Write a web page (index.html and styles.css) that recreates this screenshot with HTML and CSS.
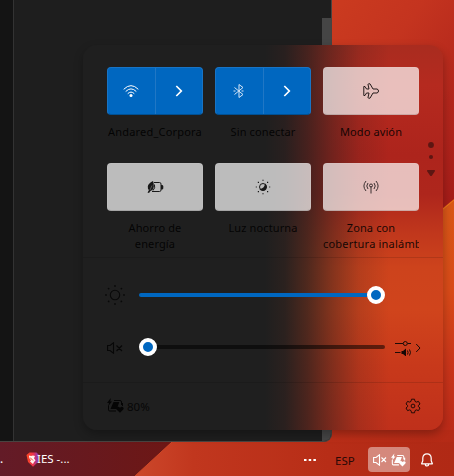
FILE: index.html
```html
<!DOCTYPE html>
<html lang="es">
<head>
<meta charset="utf-8">
<title>Configuración rápida</title>
<link rel="stylesheet" href="styles.css">
</head>
<body>
<div class="desktop">
  <svg class="wallpaper" viewBox="0 0 454 476" aria-hidden="true">
    <defs>
      <linearGradient id="top" x1="330" y1="0" x2="454" y2="90" gradientUnits="userSpaceOnUse"><stop offset="0" stop-color="#cb3b1f"/><stop offset=".5" stop-color="#c4341f"/><stop offset="1" stop-color="#b3271c"/></linearGradient>
      <linearGradient id="edge" x1="0" y1="90" x2="0" y2="210" gradientUnits="userSpaceOnUse"><stop offset="0" stop-color="#a91f1a" stop-opacity="0"/><stop offset="1" stop-color="#a41b18"/></linearGradient>
      <linearGradient id="fold" x1="0" y1="200" x2="0" y2="430" gradientUnits="userSpaceOnUse"><stop offset="0" stop-color="#d95817"/><stop offset=".4" stop-color="#d84a18"/><stop offset=".7" stop-color="#ca361a"/><stop offset="1" stop-color="#bb2a18"/></linearGradient>
      <linearGradient id="wine" x1="0" y1="0" x2="172" y2="0" gradientUnits="userSpaceOnUse"><stop offset="0" stop-color="#651c28"/><stop offset="1" stop-color="#701816"/></linearGradient>
      <linearGradient id="bar" x1="140" y1="0" x2="454" y2="0" gradientUnits="userSpaceOnUse"><stop offset="0" stop-color="#d0482b"/><stop offset=".17" stop-color="#c5391f"/><stop offset=".6" stop-color="#bb2e18"/><stop offset="1" stop-color="#b42a16"/></linearGradient>
    </defs>
    <path fill="url(#top)" d="M0 0h454v476H0z"/>
    <path fill="url(#edge)" d="M320 90h134v130H320z"/>
    <path fill="url(#fold)" d="M454 199v277H320V308z"/>
    <path stroke="#ec7918" d="M454 200L430 220"/>
    <path fill="url(#bar)" d="M0 430h454v46H0z"/>
    <path fill="url(#wine)" d="M0 430h185L135 476H0z"/>
    <path stroke="#d34a28" d="M172 442L135 476"/>
  </svg>

  <div class="app-window"><div class="rail"></div><div class="canvas"></div><div class="scrollbar"></div></div>

  <section class="panel">
    <div class="tiles">
      <div class="cell">
        <div class="tile on">
          <span class="half"><svg width="16" height="14" viewBox="0 0 16 14" fill="none" stroke="#fff"><path d="M.7 5.300Q8-2 15.300 5.300M2.700 7.500Q8 2.300 13.300 7.500M4.700 9.700Q8 6.500 11.300 9.700"/><circle cx="8" cy="11.500" r="1.500" fill="#fff" stroke="none"/></svg></span>
          <span class="half"><svg width="8" height="12" viewBox="0 0 8 12" fill="none" stroke="#fff" stroke-width="1.700"><path d="M1.300 1l5 5-5 5"/></svg></span>
        </div>
        <div class="label wide">Andared_Corpora</div>
      </div>
      <div class="cell">
        <div class="tile on">
          <span class="half"><svg width="12" height="16" viewBox="0 0 12 16" fill="none" stroke="#d6e6f6"><path d="M1.500 4.500l8.500 7L6 14.500v-13l4 3-8.500 7M.5 8h2M8.500 8h2"/></svg></span>
          <span class="half"><svg width="8" height="12" viewBox="0 0 8 12" fill="none" stroke="#fff" stroke-width="1.700"><path d="M1.300 1l5 5-5 5"/></svg></span>
        </div>
        <div class="label">Sin conectar</div>
      </div>
      <div class="cell">
        <div class="tile"><svg width="16" height="16" viewBox="0 0 16 16" fill="none" stroke="#241b1b" stroke-linejoin="round"><path d="M6 6L5 1.500Q5 .8 6 .8H7L10 6h4Q15.500 6.500 15.500 8T14 10h-4l-3 5.200H6Q5 15.200 5 14.500L6 10H3.500L2 12.500H.8V3.500H2L3.500 6z"/></svg></div>
        <div class="label">Modo avión</div>
      </div>
      <div class="cell">
        <div class="tile"><svg width="17" height="14" viewBox="0 0 17 14" fill="none" stroke="#191919"><path d="M7 2.500h5.500q1.500 0 1.500 1.500v6q0 1.500-1.500 1.500H5"/><path fill="#191919" stroke="none" d="M14 5h1.500l.8 1v2.500l-.8 1H14zM6 1Q1 3.500.8 6.500T2 10L.5 12.500 2 13l1.500-2Q6.500 10 6.800 6.500T6 1z"/><path stroke="#bbb" stroke-width=".4" d="M3 10l2-4.500"/><path d="M7.500 4.500Q8.500 8 6 10.500"/></svg></div>
        <div class="label">Ahorro de<br>energía</div>
      </div>
      <div class="cell">
        <div class="tile"><svg width="16" height="16" viewBox="0 0 16 16" fill="none" stroke="#191919"><circle cx="8" cy="8" r="3.500"/><path fill="#191919" stroke="none" d="M10 4.500Q12 6 11.700 8.500A4 4 0 0 1 4.500 10Q9.500 9.500 10 4.500z"/><g fill="#191919" stroke="none"><path d="M7.400.8h1.200v1H7.400zM7.400 14.200h1.200v1H7.400zM.8 7.400h1v1.200h-1zM14.200 7.400h1v1.200h-1zM2.800 2.800h1.200V4H2.800zM12 2.800h1.200V4H12zM2.800 12h1.200v1.200H2.800zM12 12h1.200v1.200H12z"/></g></svg></div>
        <div class="label">Luz nocturna</div>
      </div>
      <div class="cell">
        <div class="tile"><svg width="16" height="14" viewBox="0 0 16 14" fill="none" stroke="#3b3030"><path d="M3 1Q-1.200 6 3 11M13 1Q17.200 6 13 11M5 3Q2.500 6 5 9M11 3Q13.500 6 11 9"/><circle cx="8" cy="5.500" r="1.500"/><path d="M8 6v7.500"/></svg></div>
        <div class="label">Zona con<span class="clip">cobertura inalámb</span></div>
      </div>
    </div>

    <div class="sliders">
      <div class="slider-row">
        <svg class="lead" width="20" height="20" viewBox="0 0 20 20" fill="none" stroke="#090909" stroke-width="1.100"><circle cx="10" cy="10" r="4.700"/><g fill="#090909" stroke="none"><circle cx="10" cy="1" r=".9"/><circle cx="10" cy="19" r=".9"/><circle cx="1" cy="10" r=".9"/><circle cx="19" cy="10" r=".9"/><circle cx="3.600" cy="3.600" r=".9"/><circle cx="16.400" cy="3.600" r=".9"/><circle cx="3.600" cy="16.400" r=".9"/><circle cx="16.400" cy="16.400" r=".9"/></g></svg>
        <div class="slider"><span class="fill"></span><span class="thumb"></span></div>
      </div>
      <div class="slider-row">
        <svg class="lead mute" width="16" height="12" viewBox="0 0 16 12" fill="none" stroke="#070707" stroke-width="1.100"><path d="M.6 3.500H3L6.500.8v10.400L3 8.500H.6zM9.500 3.500l5.500 5.500M15 3.500L9.500 9"/></svg>
        <div class="slider"><span class="thumb"></span><span class="rest"></span></div>
        <svg class="mixer" width="26" height="16" viewBox="0 0 26 16" fill="none" stroke="#1d0c08"><path d="M0 3.500h8M12.500 3.500H16M0 12.500h5.500"/><circle cx="10.300" cy="3.500" r="2"/><path fill="#150705" stroke="none" d="M6.500 11H8l3-2.500v8L8 14H6.500z"/><path d="M12.500 10.500q1.200 2 0 4M14.500 9.500q2 3 0 6"/><path d="M21.200 4l3.800 4-3.800 4"/></svg>
      </div>
    </div>

    <footer class="footer">
      <svg width="17" height="15" viewBox="0 0 17 15" fill="none" stroke="#050505"><path d="M7 2.500h6q1.500 0 1.500 1.500v3M1.500 7.500v4.300q0 1.200 1.200 1.200H9M15.500 5v3"/><path fill="#050505" stroke="none" d="M3.800 0L0 5h2L1.300 8 5 3.500H3.300zM6.500 4h5.800l-2.500 7H3.500zM13 14.800L9.500 11.500q-.8-2.500 1.500-2.800 1.300 0 2 1.100 2-2 3.500 0 .5 1-.5 2z"/></svg>
      <span class="percent">80%</span>
      <svg class="gear" width="16" height="16" viewBox="0 0 16 16" fill="none" stroke="#240b07" stroke-linejoin="round"><circle cx="8" cy="8" r="1.900"/><path d="M6.500 1.200h3l.5 2.200 1.300.7 2.200-.7L15 6l-1.600 1.400v1.200L15 10l-1.500 2.600-2.200-.7-1.300.7-.5 2.200h-3L6 12.600l-1.300-.7-2.200.7L1 10l1.600-1.400V7.400L1 6l1.500-2.600 2.200.7L6 3.400z"/></svg>
    </footer>

    <svg class="pager" width="8" height="36" viewBox="0 0 8 36" fill="#5d1612"><circle cx="4" cy="4" r="2.900"/><circle cx="4" cy="16" r="2"/><path d="M.5 29h7q.8.500.2 1.400L5 34.400q-1 1.200-2 0L.3 30.400Q-.2 29.500.5 29z"/></svg>
  </section>

  <div class="taskbar">
    <span class="task-dot">.</span>
    <svg class="brave" width="14" height="15" viewBox="0 0 14 15"><defs><linearGradient id="lion"><stop offset="0" stop-color="#ff4a20"/><stop offset=".55" stop-color="#e9314f"/><stop offset="1" stop-color="#753bc9"/></linearGradient></defs><path fill="url(#lion)" d="M3.500.5h7L13 3l-1 7-5 4.700L2 10 .5 3z"/><path fill="#fff2ee" d="M3 3.500l2 .5 2-.5 2 .5-1 2.200 1.500 2.300L8 10l-1 2-3-2.500 1-1.200-2-2.500z"/><path stroke="#e9472d" d="M4 5.500l3 3"/></svg>
    <span class="task-title">IES -...</span>
    <svg class="more" width="14" height="4" viewBox="0 0 14 4" fill="#fff"><path d="M1 1h2.500v2H1zM5.700 1h2.500v2H5.700zM10.400 1h2.500v2h-2.500z"/></svg>
    <span class="lang">ESP</span>
    <div class="tray">
      <svg width="14" height="12" viewBox="0 0 14 12" fill="none" stroke="#fff" stroke-width="1.100"><path d="M.6 3.500H3L6.500.8v10.400L3 8.500H.6zM8.500 3.500l4.500 4.500M13 3.500L8.500 8"/></svg>
      <svg width="15" height="14" viewBox="0 0 17 15" fill="none" stroke="#fff" stroke-width="1.200"><path d="M7 2.500h6q1.500 0 1.500 1.500v3M1.500 7.500v4.300q0 1.200 1.200 1.200H9M15.500 5v3"/><path fill="#fff" stroke="none" d="M3.800 0L0 5h2L1.300 8 5 3.500H3.300zM6.500 4h5.800l-2.500 7H3.500zM13 14.800L9.500 11.500q-.8-2.500 1.500-2.800 1.300 0 2 1.100 2-2 3.500 0 .5 1-.5 2z"/></svg>
    </div>
    <svg class="bell" width="12" height="14" viewBox="0 0 12 14" fill="none" stroke="#fff" stroke-width="1.200" stroke-linejoin="round"><path d="M6 .8Q10 .8 10.200 5v2.800L11.400 10.800H.6L1.800 7.800V5Q2 .8 6 .8zM4.300 11q0 2 1.700 2t1.700-2"/></svg>
  </div>
</div>
</body>
</html>
```

FILE: styles.css
```css
* { box-sizing: border-box; }
body { margin: 0; overflow: hidden; font-family: "Noto Sans", "Open Sans", sans-serif; }
svg { display: block; flex: none; }

.desktop { position: relative; width: 454px; height: 476px; overflow: hidden; display: flex; flex-direction: column; justify-content: flex-end; }
.wallpaper { position: absolute; inset: 0; width: 454px; height: 476px; }

.app-window { position: absolute; top: 0; left: 0; width: 332px; height: 442px; display: flex; overflow: hidden; background: #1e1e1e; border: solid #484340; border-width: 0 1px 1px 0; border-radius: 0 0 8px 0; }
.rail { width: 14px; background: #141414; border-right: 1px solid #333; }
.canvas { flex: 1; }
.scrollbar { width: 9px; margin-top: 18px; background: #454545; }

.panel {
  position: absolute; left: 83px; top: 45px; width: 360px; height: 385px;
  border-radius: 14px; overflow: hidden;
  background:
    linear-gradient(90deg, #1f1f1f 0, #1f1f1f 182px, rgba(31,31,31,.93) 202px, rgba(34,31,30,.74) 224px, rgba(40,32,30,.44) 250px, rgba(44,32,30,.16) 276px, rgba(44,32,30,0) 306px),
    linear-gradient(180deg, #a92c1f 0, #b52a1f 40px, #ad241c 110px, #ae261c 150px, #bf361c 185px, #cd431c 222px, #d0441c 265px, #c8391b 320px, #bf301b 385px);
  box-shadow: 0 4px 10px rgba(0,0,0,.28);
}

.tiles { display: grid; grid-template-columns: repeat(3, 96px); grid-auto-rows: 96px; gap: 0 12px; height: 213px; padding: 22px 24px 0; border-bottom: 1px solid rgba(0,0,0,.12); }
.cell { min-width: 0; }
.tile { display: flex; align-items: center; justify-content: center; height: 48px; border-radius: 4px; background: rgba(255,255,255,.7); border: 1px solid rgba(255,255,255,.06); border-bottom-color: rgba(0,0,0,.12); }
.tile.on { background: #0067c0; border-color: #1874c5; border-bottom-color: #005093; }
.half { display: flex; align-items: center; justify-content: center; flex: 1; height: 100%; }
.half + .half { border-left: 1px solid #2077c5; }
.label { margin-top: 9px; font-size: 11px; line-height: 16px; text-align: center; color: rgba(0,0,0,.88); white-space: nowrap; letter-spacing: .12px; }
.wide { letter-spacing: .2px; }
.clip { display: block; overflow: hidden; text-align: left; letter-spacing: .2px; }

.sliders { height: 125px; padding: 11px 22px 0; border-bottom: 1px solid rgba(0,0,0,.12); }
.slider-row { display: flex; align-items: center; height: 52px; }
.lead { margin-right: 14px; }
.mute { margin: 1px 16px 0 2px; }
.slider { display: flex; align-items: center; width: 246px; }
.fill { width: 228px; height: 4px; border-radius: 2px 0 0 2px; background: #0067c0; }
.rest { flex: 1; height: 4px; border-radius: 0 2px 2px 0; background: rgba(0,0,0,.52); }
.thumb { flex: none; width: 18px; height: 18px; border: 4px solid #fff; border-radius: 50%; background: #0067c0; }
.mixer { margin: 2px 0 0 10px; }

.footer { display: flex; align-items: center; height: 47px; padding: 0 22px 2px 24px; }
.percent { margin: 2px 0 0 3px; font-size: 11.5px; color: #070707; }
.gear { margin-left: auto; }
.pager { position: absolute; left: 344px; top: 96px; }

.taskbar { position: relative; display: flex; align-items: center; height: 34px; color: #fff; background: rgba(0,0,0,.02); }
.task-dot { width: 26px; font-size: 12px; line-height: 16px; }
.task-title { margin-left: -3px; width: 266px; font-size: 11.5px; line-height: 16px; }
.more { margin-top: 2px; }
.lang { margin: 2px 0 0 18px; width: 33px; font-size: 11.5px; color: #2a0907; }
.tray { display: flex; align-items: center; justify-content: center; gap: 4px; width: 42px; height: 25px; margin-top: 1px; border-radius: 4px; background: rgba(255,255,255,.44); }
.bell { margin: 2px 0 0 11px; }
```
